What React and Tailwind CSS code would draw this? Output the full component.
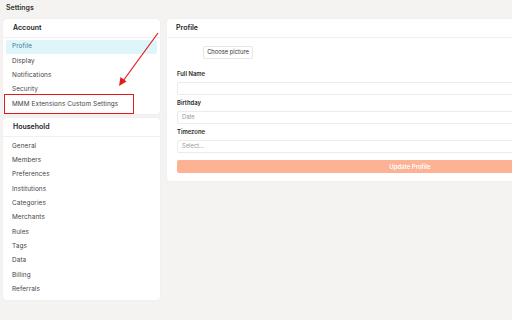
import React from 'react';

const account = ['Profile', 'Display', 'Notifications', 'Security', 'MMM Extensions Custom Settings'];
const household = ['General', 'Members', 'Preferences', 'Institutions', 'Categories', 'Merchants', 'Rules', 'Tags', 'Data', 'Billing', 'Referrals'];

function NavCard({ title, items, active, children }) {
  return (
    <div className="relative bg-white rounded-[4px] shadow-[0_0_2px_rgba(0,0,0,0.06)] pb-[3px]">
      <div className="h-[19px] flex items-center pl-[10px] text-[7px] font-semibold text-[#222] border-b border-[#f1f0ee]">
        {title}
      </div>
      <div className="pt-[2px]">
        {items.map((item) => (
          <div
            key={item}
            className={
              'h-[14.3px] mx-[3px] px-[6px] flex items-center text-[6.4px] tracking-[0.1px] rounded-[2px] ' +
              (item === active ? 'bg-[#def6f9] text-[#3c7f93]' : 'text-[#444]')
            }
          >
            {item}
          </div>
        ))}
      </div>
      {children}
    </div>
  );
}

function Field({ label, placeholder }) {
  return (
    <div className="flex flex-col">
      <div className="h-[15px] flex items-center text-[5.9px] font-semibold text-[#2b2b2b]">{label}</div>
      <div className="h-[13px] border border-[#ecebea] rounded-[2px] flex items-center pl-[4px] text-[5.8px] text-[#9a9a9a]">
        {placeholder}
      </div>
    </div>
  );
}

export default function App() {
  return (
    <div className="relative w-[512px] h-[320px] overflow-hidden bg-[#f4f3f1] pt-[2px] font-['Inter',sans-serif]">
      <div className="h-[17px] flex items-center pl-[6px] pb-[5px] text-[7px] font-semibold text-[#333]">Settings</div>

      <div className="flex gap-[7px] pl-[3px]">
        <div className="w-[157px] shrink-0 flex flex-col gap-[4px]">
          <NavCard title="Account" items={account} active="Profile">
            <div className="absolute left-[1px] top-[75px] w-[130px] h-[20px] border border-solid border-[#e3191c]" />
          </NavCard>
          <NavCard title="Household" items={household} />
        </div>

        <div className="w-[486px] shrink-0 self-start bg-white rounded-[4px] shadow-[0_0_2px_rgba(0,0,0,0.06)] pb-[8px]">
          <div className="h-[19px] flex items-center pl-[9px] text-[7px] font-semibold text-[#222] border-b border-[#f1f0ee]">
            Profile
          </div>
          <div className="px-[10px] pt-[8px]">
            <div className="ml-[26px] w-[50px] h-[13px] border border-[#e8e7e5] rounded-[2px] flex items-center justify-center text-[5.8px] text-[#333]">
              Choose picture
            </div>
            <div className="mt-[8px] flex flex-col gap-[1px]">
              <Field label="Full Name" placeholder="" />
              <Field label="Birthday" placeholder="Date" />
              <Field label="Timezone" placeholder="Select..." />
            </div>
            <div className="mt-[7px] h-[13px] bg-[#fdb294] rounded-[2px] flex items-center justify-center text-[6px] font-semibold text-white">
              Update Profile
            </div>
          </div>
        </div>
      </div>

      <svg className="absolute left-0 top-0 pointer-events-none" width="512" height="320">
        <line x1="158" y1="33" x2="123" y2="81" stroke="#e3191c" strokeWidth="1.2" />
        <polygon points="119,86 120.5,77 126.5,81.5" fill="#e3191c" />
      </svg>
    </div>
  );
}
